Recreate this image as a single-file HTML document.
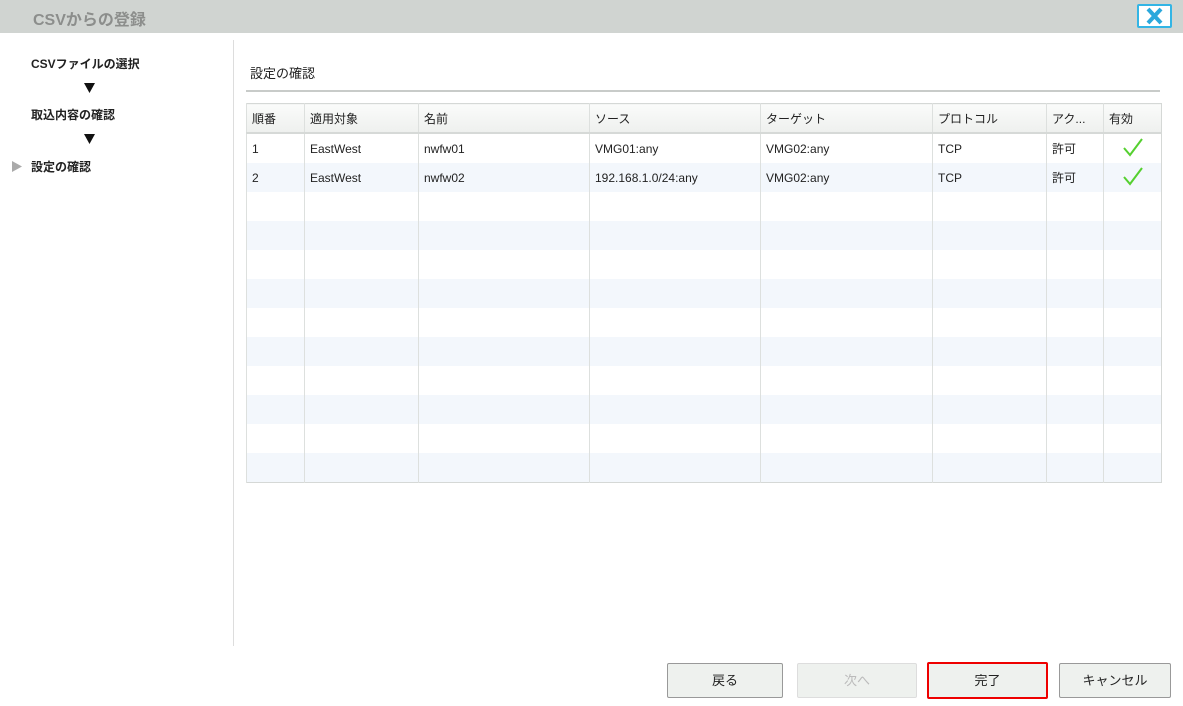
<!DOCTYPE html><html><head><meta charset="utf-8"><style>
body{margin:0;width:1183px;height:706px;background:#fff;font-family:"Liberation Sans","Noto Sans CJK JP",sans-serif;font-size:12px;color:#222;position:relative;overflow:hidden}
.a{position:absolute}
.title{left:0;top:0;width:1183px;height:33px;background:#d0d4d1}
.title span{position:absolute;left:33px;top:6px;font-size:16px;font-weight:bold;color:#8c8e8c}
.close{left:1137px;top:4px;width:31px;height:20px;border:2px solid #33b5e5;background:#fff;border-radius:2px}
.nav{font-weight:bold;font-size:12px}
table{border-collapse:collapse;position:absolute;left:246px;top:103px;width:915px;table-layout:fixed;border:1px solid #d5d8d6}
td,th{border-left:1px solid #dde0de;padding:0 0 0 5px;text-align:left;font-weight:normal;height:29px;white-space:nowrap;overflow:hidden}
th{height:28px;background:linear-gradient(#fafbfa,#eef0ee);border-bottom:2px solid #d6d9d7}
tr:nth-child(odd) td{background:#f3f7fc}
.btn{position:absolute;top:663px;height:33px;border:1px solid #999;border-radius:2px;background:#eef1ee;text-align:center;line-height:33px;font-size:13px}
.ck{text-align:center;padding:0}
</style></head><body>
<div class="a title"><span>CSVからの登録</span></div>
<div class="a close"><svg width="31" height="20" viewBox="0 0 31 20"><path d="M9 3 L22 17 M22 3 L9 17" stroke="#2aa8dc" stroke-width="4"/></svg></div>
<div class="a nav" style="left:31px;top:55px">CSVファイルの選択</div>
<svg class="a" style="left:84px;top:83px" width="11" height="10"><path d="M0 0H11L5.5 10Z" fill="#111"/></svg>
<div class="a nav" style="left:31px;top:106px">取込内容の確認</div>
<svg class="a" style="left:84px;top:134px" width="11" height="10"><path d="M0 0H11L5.5 10Z" fill="#111"/></svg>
<svg class="a" style="left:12px;top:161px" width="10" height="11"><path d="M0 0V11L10 5.5Z" fill="#aaa"/></svg>
<div class="a nav" style="left:31px;top:158px">設定の確認</div>
<div class="a" style="left:233px;top:40px;width:1px;height:606px;background:#ddd"></div>
<div class="a" style="left:250px;top:63px;font-size:13px">設定の確認</div>
<div class="a" style="left:246px;top:90px;width:914px;height:2px;background:#c8cbc9"></div>
<table>
<colgroup><col style="width:58px"><col style="width:114px"><col style="width:171px"><col style="width:171px"><col style="width:172px"><col style="width:114px"><col style="width:57px"><col style="width:58px"></colgroup>
<tr><th>順番</th><th>適用対象</th><th>名前</th><th>ソース</th><th>ターゲット</th><th>プロトコル</th><th>アク...</th><th>有効</th></tr>
<tr><td>1</td><td>EastWest</td><td>nwfw01</td><td>VMG01:any</td><td>VMG02:any</td><td>TCP</td><td>許可</td><td class="ck"><svg width="20" height="20"><path d="M1 11L7 18L19 2" stroke="#55d030" stroke-width="2" fill="none"/></svg></td></tr>
<tr><td>2</td><td>EastWest</td><td>nwfw02</td><td>192.168.1.0/24:any</td><td>VMG02:any</td><td>TCP</td><td>許可</td><td class="ck"><svg width="20" height="20"><path d="M1 11L7 18L19 2" stroke="#55d030" stroke-width="2" fill="none"/></svg></td></tr>
<tr><td></td><td></td><td></td><td></td><td></td><td></td><td></td><td></td></tr>
<tr><td></td><td></td><td></td><td></td><td></td><td></td><td></td><td></td></tr>
<tr><td></td><td></td><td></td><td></td><td></td><td></td><td></td><td></td></tr>
<tr><td></td><td></td><td></td><td></td><td></td><td></td><td></td><td></td></tr>
<tr><td></td><td></td><td></td><td></td><td></td><td></td><td></td><td></td></tr>
<tr><td></td><td></td><td></td><td></td><td></td><td></td><td></td><td></td></tr>
<tr><td></td><td></td><td></td><td></td><td></td><td></td><td></td><td></td></tr>
<tr><td></td><td></td><td></td><td></td><td></td><td></td><td></td><td></td></tr>
<tr><td></td><td></td><td></td><td></td><td></td><td></td><td></td><td></td></tr>
<tr><td></td><td></td><td></td><td></td><td></td><td></td><td></td><td></td></tr>
</table>
<div class="btn" style="left:667px;width:114px">戻る</div>
<div class="btn" style="left:797px;width:118px;border-color:#ddd;color:#bbb">次へ</div>
<div class="btn" style="left:927px;width:117px;border:2px solid #e00;top:662px">完了</div>
<div class="btn" style="left:1059px;width:110px">キャンセル</div>
</body></html>
